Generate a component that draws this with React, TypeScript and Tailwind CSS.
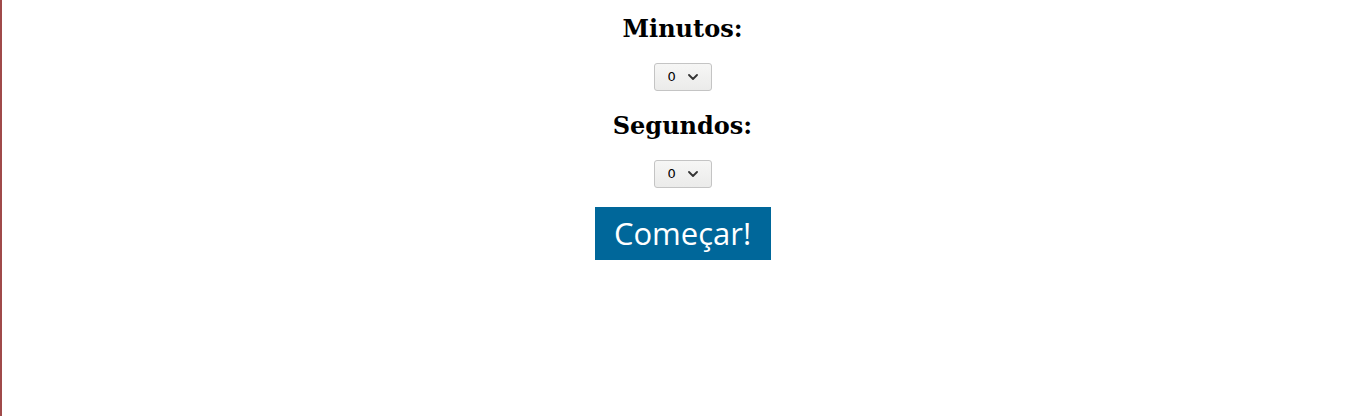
import { useState } from 'react';

function TimeSelect({ value, onChange }: { value: number; onChange: (v: number) => void }) {
  return (
    <div className="relative inline-block">
      <select
        value={value}
        onChange={(e) => onChange(Number(e.target.value))}
        className="appearance-none w-[58px] h-[28px] pl-[13px] pr-6 rounded-[3px] border border-[#c4c4c4] bg-gradient-to-b from-[#f6f6f5] to-[#ebebea] text-[13px] text-black font-['DejaVu_Sans',sans-serif] outline-none"
      >
        {Array.from({ length: 60 }, (_, i) => (
          <option key={i} value={i}>
            {i}
          </option>
        ))}
      </select>
      <svg
        className="pointer-events-none absolute right-[14px] top-[11px]"
        width="10"
        height="6"
        viewBox="0 0 10 6"
        fill="none"
      >
        <path d="M1 1l4 4 4-4" stroke="#333" strokeWidth="1.8" strokeLinecap="round" strokeLinejoin="round" />
      </svg>
    </div>
  );
}

export default function App() {
  const [min, setMin] = useState(0);
  const [sec, setSec] = useState(0);

  return (
    <div className="min-h-[416px] bg-white border-l-2 border-[#a04a4a] pr-[2px] flex flex-col items-center font-['DejaVu_Serif',serif]">
      <h2 className="mt-[13px] text-[24px] leading-[32px] font-bold text-black">Minutos:</h2>
      <div className="mt-[18px]">
        <TimeSelect value={min} onChange={setMin} />
      </div>
      <h2 className="mt-[19px] text-[24px] leading-[32px] font-bold text-black">Segundos:</h2>
      <div className="mt-[18px]">
        <TimeSelect value={sec} onChange={setSec} />
      </div>
      <button className="mt-[19px] w-[176px] h-[53px] bg-[#00679a] text-white text-[31px] font-['Open_Sans',sans-serif] leading-none">
        Começar!
      </button>
    </div>
  );
}
